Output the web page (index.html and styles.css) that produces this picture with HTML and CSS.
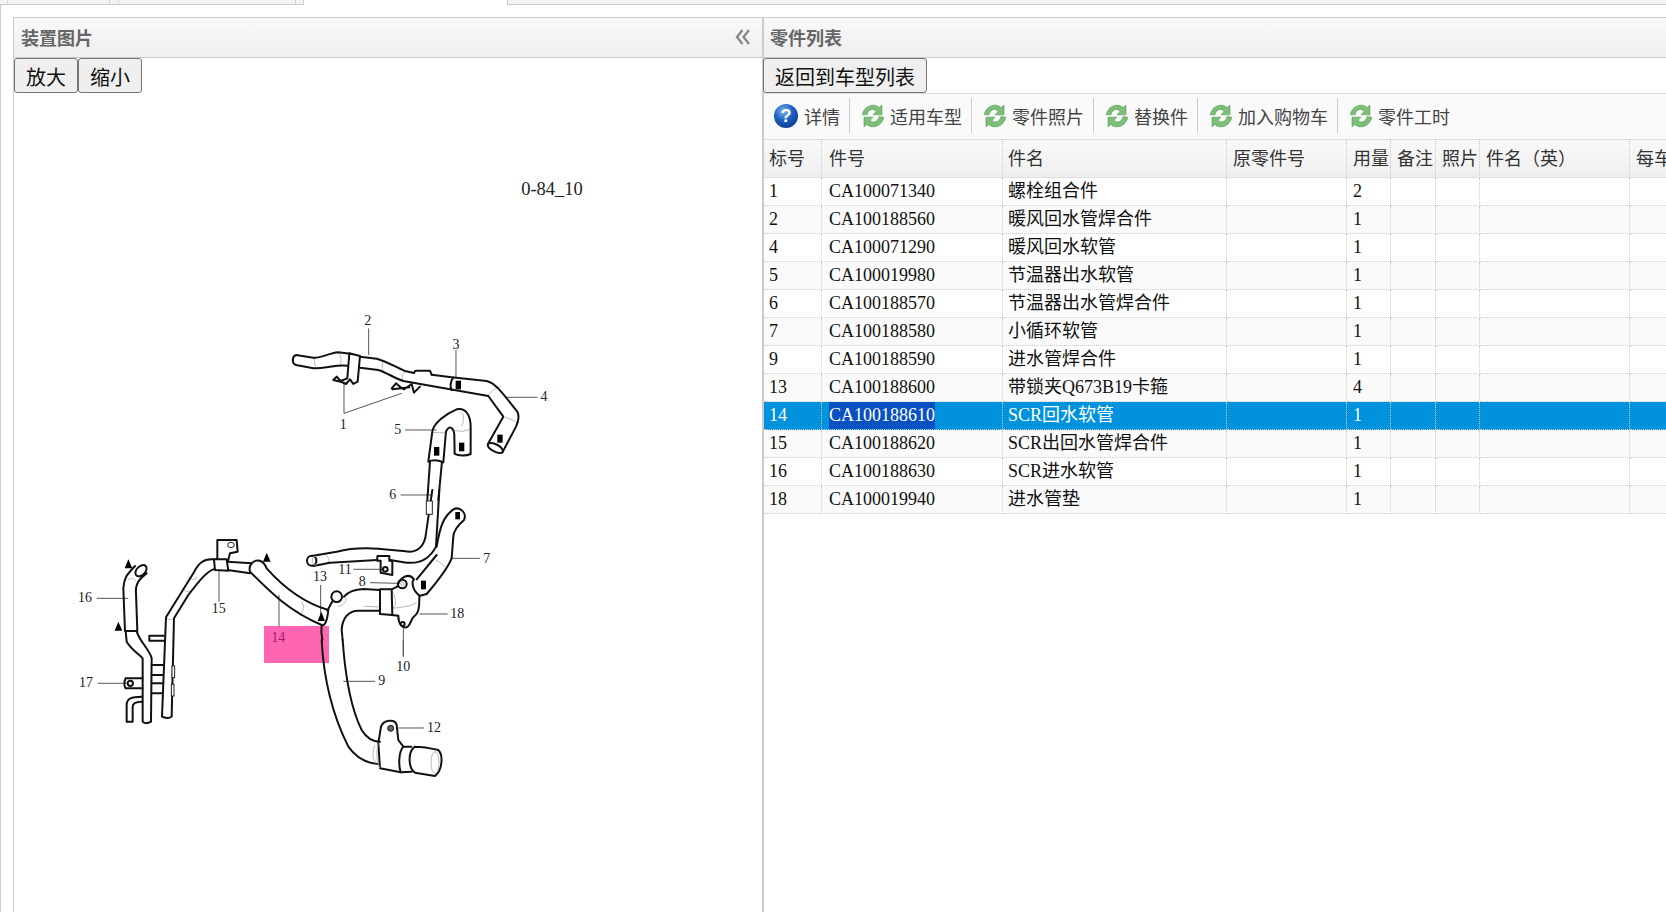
FILE: index.html
```html
<!DOCTYPE html>
<html lang="zh-CN">
<head>
  <meta charset="UTF-8" />
  <title>零件列表</title>
  <link rel="stylesheet" href="styles.css">
</head>
<body>

  <!-- Tabs (only their lower edge is in view) -->
  <div class="tabs">
    <div class="tab tab-a"></div>
    <div class="tab tab-b"></div>
    <div class="tab tab-active"></div>
  </div>

  <div class="content">

    <!-- Left panel: assembly drawing -->
    <div class="panel panel-left">
      <div class="panel-title">
        <span>装置图片</span>
        <svg class="collapse" viewBox="0 0 16 16" width="16" height="16">
          <path d="M7.500 1L2 8l5.500 7M14 1L8.500 8l5.500 7"/>
        </svg>
      </div>
      <div class="btn-row">
        <button class="btn">放大</button><button class="btn">缩小</button>
      </div>

      <svg class="drawing" viewBox="14 93 748 819" width="748" height="819">
        <text class="code" x="552" y="195">0-84_10</text>
        <rect class="mark" x="264" y="626" width="65" height="37"/>

        <!-- upper hoses, traced at 3x -->
        <g transform="translate(270 300) scale(.3333)">
          <path class="ld" d="M296,85V165M558,150V235M708,292H803M222,250V340L395,280M405,390H500M392,585H487"/>
          <path class="arc" d="M135,172C130,185 135,200 140,205M205,157C215,170 215,185 210,195M340,180C335,190 335,205 340,212M405,213C395,225 395,235 400,245M655,288C665,270 680,262 693,260M705,352C715,355 730,360 745,370M487,398Q510,395 528,400M554,392Q580,398 600,388M575,335C585,350 580,370 575,378"/>
          <path class="ln" d="M78,165L130,173C150,176 175,160 205,157L240,161M270,170L320,176C345,182 375,200 405,213L432,219M485,224L545,232L650,243C680,250 705,290 742,335C750,350 745,365 738,380L697,458M655,430L700,350L655,288L540,268L400,243C375,235 350,218 325,210L270,203M232,197C200,193 170,205 130,205L78,195C65,190 65,170 78,165"/>
          <path class="ln" d="M238,160L232,235L212,243L200,230L190,240L215,246L228,252L240,238L250,252L263,245L270,168L238,160"/>
          <path class="ln" d="M365,265L378,250L392,262L402,268L425,252L432,278L450,260M368,268L418,262"/>
          <path class="ln" d="M432,218L437,212L480,212L485,224M550,232C540,245 540,262 545,270"/>
          <ellipse class="ln" cx="676" cy="444" rx="25" ry="11" transform="rotate(28 676 444)"/>
          <path class="ln" d="M475,485L487,395C490,370 530,340 560,328C590,322 602,350 602,380L602,462C590,468 565,468 554,462L553,405C552,385 538,372 528,395L520,487C505,480 490,478 475,485"/>
          <path class="ln" d="M480,485L472,600M516,485L505,600"/>
          <rect class="blk" x="557" y="242" width="16" height="26"/>
          <rect class="blk" x="682" y="404" width="16" height="24"/>
          <rect class="blk" x="492" y="441" width="16" height="26"/>
          <rect class="blk" x="567" y="428" width="16" height="26"/>
          <text class="lb" x="293" y="76">2</text>
          <text class="lb" x="558" y="147">3</text>
          <text class="lb" x="822" y="304">4</text>
          <text class="lb" x="220" y="387">1</text>
          <text class="lb" x="383" y="402">5</text>
          <text class="lb" x="368" y="597">6</text>
        </g>

        <!-- manifold in the middle -->
        <g transform="translate(270 490) scale(.3333)">
          <path class="ld" d="M545,205H630M300,278L385,280M250,238H340M448,372H533M400,415V500M152,285V375"/>
          <path class="arc" d="M165,192C180,205 178,215 170,220M497,210C510,215 520,225 525,232M367,305C375,320 385,345 367,355C390,352 420,350 440,338M283,349L330,351M205,350C225,345 235,330 222,318"/>
          <path class="ln" d="M487,0L468,130C465,165 445,185 420,185C350,180 280,165 200,185L125,198M508,0L498,170C480,205 450,222 410,218L360,210M322,210L180,218L130,228"/>
          <ellipse class="ln" cx="125" cy="212" rx="14" ry="15"/>
          <ellipse class="arc" cx="135" cy="212" rx="8" ry="13"/>
          <rect class="thin" x="469" y="33" width="18" height="40"/>
          <path class="ln" d="M322,198H358V212H367V255L332,248V212H322V198"/>
          <circle class="ln" cx="346" cy="238" r="7"/>
          <path class="ln" d="M500,170C510,110 520,80 550,58C570,48 592,70 582,90C565,105 550,120 550,140L545,205C535,230 510,265 470,312M500,195L440,268"/>
          <path class="ln" d="M365,298L382,290C388,265 415,245 432,268C425,275 425,300 450,318M365,375L385,377C385,400 395,415 410,412C425,405 420,385 437,375C450,365 448,335 448,318L470,312"/>
          <path class="ln" d="M330,298L365,298L367,375L330,372Z"/>
          <circle class="ln" cx="397" cy="282" r="13"/>
          <circle class="arc" cx="397" cy="282" r="5"/>
          <circle class="ln" cx="398" cy="402" r="6"/>
          <path class="ln" d="M330,300L280,297C255,298 235,305 222,320M330,362L265,362C235,362 217,385 215,420L218,450M155,405C153,420 155,440 157,450M188,332L172,362"/>
          <circle class="ln" cx="200" cy="320" r="16"/>
          <rect class="blk" x="453" y="272" width="15" height="26"/>
          <rect class="blk" x="556" y="66" width="14" height="22"/>
          <path class="blk" d="M154,365L165,393H143Z"/>
          <text class="lb" x="650" y="219">7</text>
          <text class="lb" x="277" y="289">8</text>
          <text class="lb" x="225" y="252">11</text>
          <text class="lb" x="562" y="384">18</text>
          <text class="lb" x="150" y="272">13</text>
        </g>

        <!-- left group of pipes -->
        <g transform="translate(60 530) scale(.3333)">
          <path class="ld" d="M110,205H205M113,460H200M477,120V215M657,195V290"/>
          <path class="arc" d="M205,150C212,140 222,145 228,155M725,215C735,230 730,245 720,258M385,140C395,150 405,152 410,140M368,175C375,185 385,188 392,182M318,265C328,270 335,270 342,265"/>
          <path class="ln" d="M225,108C205,130 192,140 190,175L195,303H232L228,190C225,160 240,145 260,130"/>
          <ellipse class="ln" cx="243" cy="122" rx="20" ry="13" transform="rotate(-45 243 122)"/>
          <path class="ln" d="M197,303L200,335C215,360 240,375 248,385L248,575C255,582 265,580 273,575L275,385C270,360 235,330 230,303"/>
          <path class="ln" d="M197,445H248M197,475H248M197,445C192,455 192,470 197,475"/>
          <circle class="ln" cx="211" cy="460" r="8"/>
          <path class="ln" d="M200,575L200,525C200,505 215,500 245,500M218,575L218,530C218,520 225,515 245,515M200,575H218"/>
          <path class="ln" d="M275,405H310M275,435H308M275,460H308M275,490H308"/>
          <path class="ln" d="M462,88C430,85 415,100 400,130L318,262L306,560C315,565 330,565 335,560L342,265L385,195C420,150 440,125 460,118"/>
          <path class="ln" d="M268,317H312M268,332H312M268,317V332"/>
          <rect class="thin" x="336" y="408" width="8" height="35"/>
          <rect class="thin" x="334" y="463" width="8" height="35"/>
          <path class="ln" d="M472,85L472,30H530L533,65L510,70L505,90M462,88H500L505,122L465,120Z"/>
          <ellipse class="thin" cx="513" cy="45" rx="10" ry="8"/>
          <path class="ln" d="M503,95L575,100M503,120L570,130"/>
          <path class="ln" d="M570,125C620,175 680,240 785,285C795,290 802,270 805,240C720,215 660,160 620,115C610,90 590,85 575,100C568,108 568,118 570,125"/>
          <path class="blk" d="M205,88L217,115H194Z"/>
          <path class="blk" d="M175,275L187,302H164Z"/>
          <path class="blk" d="M620,68L632,95H609Z"/>
          <text class="lb" x="75" y="217">16</text>
          <text class="lb" x="78" y="472">17</text>
          <text class="lb" x="476" y="249">15</text>
          <text class="lb lb-pink" x="655" y="335">14</text>
        </g>

        <!-- lower end of hose 9 with the fitting -->
        <g transform="translate(300 640) scale(.3333)">
          <path class="ld" d="M130,124H225M295,264H372M310,0V50"/>
          <path class="ln" d="M65,0C70,100 90,210 145,320C170,355 200,370 235,372M128,0C135,100 150,200 185,270C200,295 220,305 240,305"/>
          <path class="ln" d="M243,260C250,240 285,235 290,255L295,300L310,320M243,260L235,310L240,385L302,397"/>
          <path class="ln" d="M310,320C296,335 295,375 302,397L335,395M310,320H334"/>
          <path class="ln" d="M345,320C360,320 390,324 415,330C430,345 428,390 405,408L345,398C325,385 322,335 345,320"/>
          <path class="arc" d="M225,315C215,335 218,355 228,370M235,310C228,335 230,365 240,385"/>
          <ellipse class="arc" cx="405" cy="368" rx="12" ry="33"/>
          <circle class="dot" cx="272" cy="265" r="9"/>
          <text class="lb" x="245" y="134">9</text>
          <text class="lb" x="310" y="92">10</text>
          <text class="lb" x="402" y="277">12</text>
        </g>
      </svg>
    </div>

    <!-- Right panel: parts list -->
    <div class="panel panel-right">
      <div class="panel-title"><span>零件列表</span></div>
      <div class="btn-row">
        <button class="btn">返回到车型列表</button>
      </div>

      <svg class="defs" width="0" height="0">
        <defs>
          <radialGradient id="blue" cx="40%" cy="30%" r="75%">
            <stop offset="0" stop-color="#7fb4f0"/>
            <stop offset=".5" stop-color="#1f62c4"/>
            <stop offset="1" stop-color="#0b3a90"/>
          </radialGradient>
          <symbol id="reload" viewBox="2 2 20 20">
            <path d="M3 11C4 6 8 3 12 3c2.500 0 4 1 5 2l2.500-2v8h-7.500l2.500-2.500C13.500 7 12.500 6.500 11.500 6.500 9 6.500 7.500 8.500 7 11z"/>
            <path d="M21 13c-1 5-5 8-9 8-2.500 0-4-1-5-2l-2.500 2v-8H12l-2.500 2.500c1 1 2 1.500 3 1.500 2.500 0 4-2 4.500-4.500z"/>
          </symbol>
        </defs>
      </svg>

      <div class="toolbar">
        <a class="tool tool-first">
          <svg class="icon" viewBox="0 0 24 24"><circle cx="12" cy="12" r="12" fill="url(#blue)"/><text class="qmark" x="12" y="18">?</text></svg>
          详情
        </a>
        <a class="tool"><svg class="icon reload"><use href="#reload"/></svg>适用车型</a>
        <a class="tool"><svg class="icon reload"><use href="#reload"/></svg>零件照片</a>
        <a class="tool"><svg class="icon reload"><use href="#reload"/></svg>替换件</a>
        <a class="tool"><svg class="icon reload"><use href="#reload"/></svg>加入购物车</a>
        <a class="tool tool-last"><svg class="icon reload"><use href="#reload"/></svg>零件工时</a>
      </div>

      <div class="grid-wrap">
        <table class="grid">
          <colgroup>
            <col class="c-no"><col class="c-code"><col class="c-name"><col class="c-old">
            <col class="c-qty"><col class="c-note"><col class="c-photo"><col class="c-en"><col class="c-car">
          </colgroup>
          <thead>
            <tr><th>标号</th><th>件号</th><th>件名</th><th>原零件号</th><th>用量</th><th>备注</th><th>照片</th><th>件名（英）</th><th>每车用量</th></tr>
          </thead>
          <tbody>
            <tr><td>1</td><td>CA100071340</td><td>螺栓组合件</td><td></td><td>2</td><td></td><td></td><td></td><td></td></tr>
            <tr><td>2</td><td>CA100188560</td><td>暖风回水管焊合件</td><td></td><td>1</td><td></td><td></td><td></td><td></td></tr>
            <tr><td>4</td><td>CA100071290</td><td>暖风回水软管</td><td></td><td>1</td><td></td><td></td><td></td><td></td></tr>
            <tr><td>5</td><td>CA100019980</td><td>节温器出水软管</td><td></td><td>1</td><td></td><td></td><td></td><td></td></tr>
            <tr><td>6</td><td>CA100188570</td><td>节温器出水管焊合件</td><td></td><td>1</td><td></td><td></td><td></td><td></td></tr>
            <tr><td>7</td><td>CA100188580</td><td>小循环软管</td><td></td><td>1</td><td></td><td></td><td></td><td></td></tr>
            <tr><td>9</td><td>CA100188590</td><td>进水管焊合件</td><td></td><td>1</td><td></td><td></td><td></td><td></td></tr>
            <tr><td>13</td><td>CA100188600</td><td>带锁夹Q673B19卡箍</td><td></td><td>4</td><td></td><td></td><td></td><td></td></tr>
            <tr class="selected"><td>14</td><td><span class="hl">CA100188610</span></td><td>SCR回水软管</td><td></td><td>1</td><td></td><td></td><td></td><td></td></tr>
            <tr><td>15</td><td>CA100188620</td><td>SCR出回水管焊合件</td><td></td><td>1</td><td></td><td></td><td></td><td></td></tr>
            <tr><td>16</td><td>CA100188630</td><td>SCR进水软管</td><td></td><td>1</td><td></td><td></td><td></td><td></td></tr>
            <tr><td>18</td><td>CA100019940</td><td>进水管垫</td><td></td><td>1</td><td></td><td></td><td></td><td></td></tr>
          </tbody>
        </table>
      </div>
    </div>

  </div>

</body>
</html>
```

FILE: styles.css
```css
* {
  box-sizing: border-box;
  margin: 0;
  padding: 0;
}

html, body {
  height: 100%;
  overflow: hidden;
}

body {
  display: flex;
  flex-direction: column;
  font-family: "Liberation Serif", "Noto Sans CJK SC", serif;
  font-size: 18px;
  color: #111;
  background-color: #fff;
}

/* tabs */
.tabs {
  display: flex;
  flex: none;
  height: 5px;
  padding-left: 7px;
  background-color: #f2f2f2;
  border-bottom: 1px solid #ccc;
}

.tab {
  border-right: 1px solid #ccc;
}

.tab-a {
  width: 103px;
  margin-right: 8px;
  border-left: 1px solid #ddd;
}

.tab-b {
  width: 178px;
  margin-right: 7px;
  border-left: 1px solid #ddd;
}

.tab-active {
  width: 205px;
  height: 5px;
  background-color: #fff;
  border-left: 1px solid #ccc;
}

/* panels */
.content {
  display: flex;
  flex: 1;
  min-height: 0;
  padding: 12px 0 0 12px;
  border-left: 1px solid #ccc;
}

.panel {
  display: flex;
  flex-direction: column;
  min-width: 0;
}

.panel-left {
  flex: none;
  width: 749px;
  border-left: 1px solid #ccc;
}

.panel-right {
  flex: 1;
  border-left: 2px solid #ccc;
}

.panel-title {
  display: flex;
  align-items: center;
  justify-content: space-between;
  flex: none;
  height: 41px;
  padding: 0 11px 2px 7px;
  font-family: "Noto Sans CJK SC", sans-serif;
  font-size: 18px;
  font-weight: bold;
  color: #666;
  background: linear-gradient(to bottom, #f9f9f9, #eee);
  border-top: 1px solid #ccc;
  border-bottom: 1px solid #ccc;
}

.panel-right .panel-title {
  padding-left: 6px;
}

.collapse {
  fill: none;
  stroke: #888;
  stroke-width: 2.400;
}

.btn-row {
  display: flex;
  flex: none;
  height: 35px;
}

.btn {
  height: 35px;
  padding: 2px 11px 0;
  font-family: "Liberation Serif", "Noto Sans CJK SC", serif;
  font-size: 20px;
  color: #111;
  background-color: #efefef;
  border: 1px solid #767676;
  border-radius: 3px;
}

.panel-right .btn {
  margin-left: -1px;
}

/* drawing */
.drawing {
  display: block;
  flex: none;
}

.code {
  font-size: 18.500px;
  text-anchor: middle;
  fill: #222;
}

.mark {
  fill: #ff66b2;
}

.ln {
  fill: none;
  stroke: #111;
  stroke-width: 6;
  stroke-linejoin: round;
  stroke-linecap: round;
}

.thin {
  fill: #fff;
  stroke: #222;
  stroke-width: 3;
}

.ld {
  fill: none;
  stroke: #555;
  stroke-width: 3;
}

.arc {
  fill: none;
  stroke: #aaa;
  stroke-width: 2.500;
}

.blk {
  fill: #000;
}

.dot {
  fill: #666;
  stroke: #111;
  stroke-width: 3;
}

.lb {
  font-size: 42px;
  text-anchor: middle;
  fill: #222;
}

.lb-pink {
  fill: #9b1c6e;
}

/* toolbar */
.defs {
  position: absolute;
}

.toolbar {
  display: flex;
  align-items: center;
  flex: none;
  height: 47px;
  padding-bottom: 2px;
  background-color: #fafafa;
  border-top: 1px solid #ddd;
  border-bottom: 1px solid #ddd;
}

.tool {
  display: flex;
  align-items: center;
  gap: 5px;
  height: 35px;
  padding: 0 9px 0 11px;
  color: #444;
  border-right: 1px solid #ccc;
}

.tool-first {
  padding-left: 10px;
  padding-right: 9px;
  gap: 6px;
}

.tool-last {
  border-right: none;
}

.icon {
  width: 24px;
  height: 24px;
  flex: none;
}

.reload {
  fill: #7dbf78;
  stroke: #4f9a4d;
  stroke-width: .5;
}

.qmark {
  font-family: "Liberation Sans", sans-serif;
  font-size: 18px;
  font-weight: bold;
  text-anchor: middle;
  fill: #fff;
}

/* grid */
.grid-wrap {
  flex: 1;
  overflow: hidden;
}

.grid {
  width: 1000px;
  table-layout: fixed;
  border-collapse: separate;
  border-spacing: 0;
}

.c-no { width: 58px; }
.c-code { width: 181px; }
.c-name { width: 224px; }
.c-old { width: 120px; }
.c-qty { width: 44px; }
.c-note { width: 45px; }
.c-photo { width: 44px; }
.c-en { width: 150px; }
.c-car { width: 134px; }

.grid th,
.grid td {
  padding: 0 0 0 6px;
  text-align: left;
  font-weight: normal;
  white-space: nowrap;
  overflow: hidden;
  border-right: 1px dotted #ccc;
}

.grid th:nth-child(1),
.grid td:nth-child(1),
.grid th:nth-child(3),
.grid td:nth-child(3) {
  padding-left: 5px;
}

.grid th:nth-child(2),
.grid td:nth-child(2) {
  padding-left: 7px;
}

.grid th {
  height: 38px;
  padding-bottom: 4px;
  color: #333;
  background: linear-gradient(to bottom, #f9f9f9, #efefef);
  border-bottom: 1px solid #ddd;
}

.grid td {
  height: 28px;
  line-height: 27px;
  border-bottom: 1px dotted #ccc;
}

.grid tbody tr:nth-child(even) {
  background-color: #fafafa;
}

.grid tbody tr.selected {
  color: #fff;
  background-color: #0092dc;
}

.hl {
  display: inline-block;
  height: 27px;
  background-color: #0a50c0;
}
```
